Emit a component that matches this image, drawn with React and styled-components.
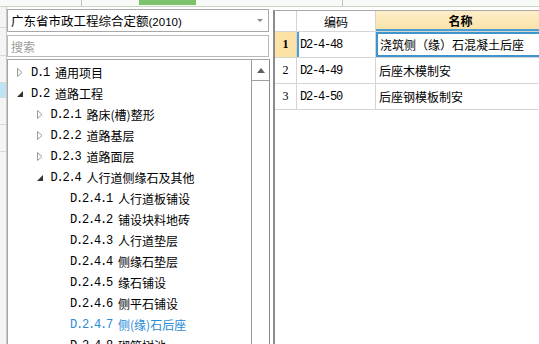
import React from "react";
import styled, { createGlobalStyle } from "styled-components";

const GlobalStyle = createGlobalStyle`
  html, body {
    margin: 0;
    padding: 0;
    background: #ffffff;
  }
  body {
    font-family: "Noto Sans CJK SC", "Liberation Sans", sans-serif;
    font-size: 12px;
    color: #000;
  }
`;

const treeItems = [
  { level: 0, code: "D.1", name: "通用项目", arrow: "closed" },
  { level: 0, code: "D.2", name: "道路工程", arrow: "open" },
  { level: 1, code: "D.2.1", name: "路床(槽)整形", arrow: "closed" },
  { level: 1, code: "D.2.2", name: "道路基层", arrow: "closed" },
  { level: 1, code: "D.2.3", name: "道路面层", arrow: "closed" },
  { level: 1, code: "D.2.4", name: "人行道侧缘石及其他", arrow: "open" },
  { level: 2, code: "D.2.4.1", name: "人行道板铺设" },
  { level: 2, code: "D.2.4.2", name: "铺设块料地砖" },
  { level: 2, code: "D.2.4.3", name: "人行道垫层" },
  { level: 2, code: "D.2.4.4", name: "侧缘石垫层" },
  { level: 2, code: "D.2.4.5", name: "缘石铺设" },
  { level: 2, code: "D.2.4.6", name: "侧平石铺设" },
  { level: 2, code: "D.2.4.7", name: "侧(缘)石后座", selected: true },
  { level: 2, code: "D.2.4.8", name: "砌筑树池" },
];

const rows = [
  { no: 1, code: "D2-4-48", name: "浇筑侧（缘）石混凝土后座", current: true },
  { no: 2, code: "D2-4-49", name: "后座木模制安" },
  { no: 3, code: "D2-4-50", name: "后座钢模板制安" },
];

const Page = styled.div`
  width: 539px;
  height: 344px;
  overflow: hidden;
  display: flex;
  flex-direction: column;
`;

const TopStrip = styled.div`
  height: 6px;
  flex: none;
  display: flex;
  background: #f7faf6;
  border-bottom: 1px solid #c8d6c3;
`;

const StripCell = styled.div`
  width: ${(p) => p.$w}px;
  flex: none;
  border-right: ${(p) => (p.$line ? "1px solid #b8c4b5" : "none")};
  background: ${(p) => (p.$green ? "#7dc36b" : "transparent")};
  height: ${(p) => (p.$green ? "5px" : "auto")};
`;

const Main = styled.div`
  flex: 1;
  min-height: 0;
  display: flex;
`;

const LeftEdge = styled.div`
  width: 6px;
  flex: none;
  display: flex;
  flex-direction: column;
  background: #f4f4f4;
  border-right: 1px solid #c9c9c9;
`;

const EdgeBlock = styled.div`
  height: ${(p) => p.$h}px;
  flex: none;
  background: ${(p) => p.$bg || "transparent"};
  border-bottom: 1px solid #d9d9d9;
`;

const LeftPanel = styled.div`
  width: 263px;
  flex: none;
  display: flex;
  flex-direction: column;
  padding-top: 2px;
`;

const Combo = styled.div`
  height: 23px;
  box-sizing: border-box;
  border: 1px solid #a9a9a9;
  margin-right: 1px;
  display: flex;
  align-items: center;
  padding-left: 3px;
  font-size: 12.5px;
  background: #fff;
`;

const ComboText = styled.span`
  flex: 1;
  white-space: nowrap;
`;

const Year = styled.span`
  font-family: "Liberation Sans", sans-serif;
  font-size: 11.5px;
`;

const ComboArrow = styled.span`
  width: 0;
  height: 0;
  border-left: 3px solid transparent;
  border-right: 3px solid transparent;
  border-top: 3px solid #8a8a8a;
  margin-right: 5px;
`;

const Search = styled.input`
  margin: 3px 1px 0 0;
  height: 22px;
  box-sizing: border-box;
  border: 1px solid #b9b9b9;
  padding: 0 3px;
  font-family: "Noto Sans CJK SC", sans-serif;
  font-size: 12px;
  outline: none;
  &::placeholder {
    color: #9a9a9a;
  }
`;

const TreeBox = styled.div`
  margin-top: 2px;
  flex: 1;
  min-height: 0;
  display: flex;
  border-top: 1px solid #a5a5a5;
  border-left: 1px solid #a5a5a5;
  border-right: 1px solid #8c8c8c;
  overflow: hidden;
`;

const TreeList = styled.div`
  flex: 1;
  padding-top: 2px;
`;

const TreeRow = styled.div`
  height: 21px;
  display: flex;
  align-items: center;
  padding-left: ${(p) => 9 + p.$level * 19.5}px;
  white-space: nowrap;
  color: ${(p) => (p.$selected ? "#2a8bd6" : "#000")};
`;

const ArrowBox = styled.span`
  width: 14px;
  flex: none;
  display: flex;
  align-items: center;
`;

const Code = styled.span`
  font-family: "Liberation Mono", monospace;
  font-size: 12px;
  letter-spacing: -1.2px;
  white-space: pre;
`;

const Name = styled.span`
  font-size: 12px;
`;

const Scrollbar = styled.div`
  width: 17px;
  flex: none;
  border-left: 1px solid #9d9d9d;
  background: #fff;
  display: flex;
  flex-direction: column;
`;

const ScrollUp = styled.div`
  height: 20px;
  border-bottom: 1px solid #a0a0a0;
  display: flex;
  align-items: center;
  justify-content: center;
`;

const Gap = styled.div`
  width: 3px;
  flex: none;
`;

const Grid = styled.div`
  flex: 1;
  min-width: 0;
  margin-top: 3px;
  border-top: 1px solid #a8a8a8;
  border-left: 2px solid #8c8c8c;
  overflow: hidden;
  display: flex;
  flex-direction: column;
`;

const GridRow = styled.div`
  display: flex;
  height: ${(p) => (p.$header ? 21 : 26)}px;
  flex: none;
  border-bottom: 1px solid #d4d4d4;
  box-sizing: border-box;
`;

const Cell = styled.div`
  flex: none;
  width: ${(p) => p.$w}px;
  box-sizing: border-box;
  border-right: 1px solid #d4d4d4;
  display: flex;
  align-items: center;
  justify-content: ${(p) => (p.$center ? "center" : "flex-start")};
  padding-left: ${(p) => (p.$center ? 0 : 3)}px;
  white-space: nowrap;
  background: ${(p) => p.$bg || "#fff"};
  font-weight: ${(p) => (p.$bold ? 700 : 400)};
`;

const NameHeader = styled(Cell)`
  background: linear-gradient(#fdeec9, #fbe3a9);
  border-bottom: 2px solid #4c9fd2;
  font-weight: 700;
`;

const ActiveCell = styled(Cell)`
  border: 2px solid #3d95cc;
  padding-left: 2px;
`;

const CodeCell = styled(Cell)`
  border-left: ${(p) => (p.$current ? "2px solid #4c9fd2" : "none")};
  padding-left: ${(p) => (p.$current ? 1 : 3)}px;
`;

const NoText = styled.span`
  font-family: "Liberation Serif", serif;
  font-size: 12px;
`;

const ClosedArrow = () => (
  <svg width="6" height="9" viewBox="0 0 6 9">
    <path d="M0.5 0.5 L5 4.5 L0.5 8.5 Z" fill="#fff" stroke="#9a9a9a" strokeWidth="1" />
  </svg>
);

const OpenArrow = () => (
  <svg width="7" height="7" viewBox="0 0 7 7" style={{ marginTop: 2 }}>
    <path d="M6 0 L6 6 L0 6 Z" fill="#333" />
  </svg>
);

const App = () => (
  <>
    <GlobalStyle />
    <Page>
      <TopStrip>
        <StripCell $w={81} $line />
        <StripCell $w={57} />
        <StripCell $w={57} $green />
        <StripCell $w={146} $line />
      </TopStrip>
      <Main>
        <LeftEdge>
          <EdgeBlock $h={20} />
          <EdgeBlock $h={27} />
          <EdgeBlock $h={26} />
          <EdgeBlock $h={14} $bg="#bfe3f3" />
          <EdgeBlock $h={26} />
          <EdgeBlock $h={26} />
        </LeftEdge>
        <LeftPanel>
          <Combo>
            <ComboText>
              广东省市政工程综合定额<Year>(2010)</Year>
            </ComboText>
            <ComboArrow />
          </Combo>
          <Search placeholder="搜索" />
          <TreeBox>
            <TreeList>
              {treeItems.map((t) => (
                <TreeRow key={t.code} $level={t.level} $selected={t.selected}>
                  <ArrowBox>
                    {t.arrow === "closed" && <ClosedArrow />}
                    {t.arrow === "open" && <OpenArrow />}
                  </ArrowBox>
                  <Code>{t.code + " "}</Code>
                  <Name>{t.name}</Name>
                </TreeRow>
              ))}
            </TreeList>
            <Scrollbar>
              <ScrollUp>
                <svg width="8" height="5" viewBox="0 0 8 5">
                  <path d="M4 0 L8 5 L0 5 Z" fill="#606060" />
                </svg>
              </ScrollUp>
            </Scrollbar>
          </TreeBox>
        </LeftPanel>
        <Gap />
        <Grid>
          <GridRow $header>
            <Cell $w={22} $center />
            <Cell $w={79} $center>编码</Cell>
            <NameHeader $w={170} $center>名称</NameHeader>
          </GridRow>
          {rows.map((r) => {
            const NameCell = r.current ? ActiveCell : Cell;
            return (
              <GridRow key={r.no}>
                <Cell $w={22} $center $bg={r.current ? "#fce3a5" : "#fff"} $bold={r.current}>
                  <NoText>{r.no}</NoText>
                </Cell>
                <CodeCell $w={79} $current={r.current}>
                  <Code>{r.code}</Code>
                </CodeCell>
                <NameCell $w={170}>
                  <Name>{r.name}</Name>
                </NameCell>
              </GridRow>
            );
          })}
        </Grid>
      </Main>
    </Page>
  </>
);

export default App;
